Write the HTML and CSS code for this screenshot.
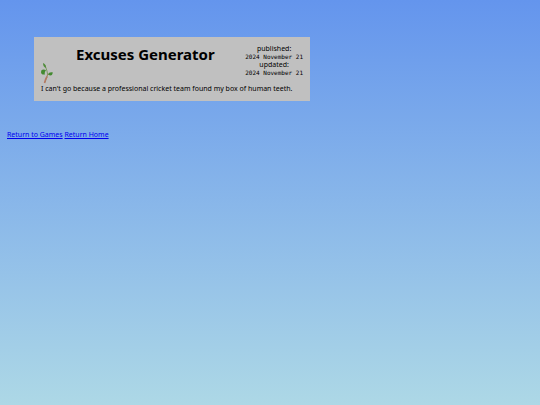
FILE: index.html
```html
<!DOCTYPE html>
<html lang="en">
<head>
<meta charset="utf-8">
<title>Excuses Generator</title>
<link rel="stylesheet" href="styles.css">
</head>
<body>
<main class="card">
  <header class="head">
    <svg class="sprig" viewBox="0 0 14 22" aria-hidden="true">
      <path d="M4 20.500Q5 17 6 15Q7 12 6 9Q5 6 4 3" fill="none" stroke="#7d9a62" stroke-width="1"/>
      <path d="M3.500 21Q4.500 17 6 14.500" fill="none" stroke="#b77762" stroke-width="1.500"/>
      <path d="M6 13.500Q7 13 8 11.500" fill="none" stroke="#b77762" stroke-width="1"/>
      <path d="M2 1Q5 2 5 6Q2 5 2 1Z" fill="#4f8c3a"/>
      <path d="M5 8Q0 6.500 0 10Q0 13 4 12.500Q3 11 5 8Z" fill="#438a31"/>
      <path d="M7 12.500Q8 9.500 12 10.500Q11 15 7 12.500Z" fill="#438a31"/>
    </svg>
    <h1 class="title">Excuses Generator</h1>
    <div class="dates">
      published:<time class="date" datetime="2024-11-21">2024 November 21</time>
      updated:<time class="date" datetime="2024-11-21">2024 November 21</time>
    </div>
  </header>
  <p class="excuse">I can't go because a professional cricket team found my box of human teeth.</p>
</main>
<nav class="links"><a href="#games">Return to Games</a> <a href="#home">Return Home</a></nav>
</body>
</html>
```
FILE: styles.css
```css
html {
  min-height: 100%;
  background: linear-gradient(#6495ed, #add8e6);
}
body {
  margin: 37px 7px;
  font: 7px/10px "Noto Sans", sans-serif;
  color: #000;
}
.card {
  width: fit-content;
  min-width: 276px;
  margin: 0 27px 29px;
  padding: 7px;
  box-sizing: border-box;
  background: #c0c0c0;
}
.head {
  display: flex;
  gap: 21px;
}
.sprig {
  width: 14px;
  height: 22px;
  align-self: flex-end;
}
.title {
  margin: 0;
  font-size: 15px;
  line-height: 20px;
}
.dates {
  margin: 0 0 8px auto;
  text-align: center;
}
.date {
  display: block;
  font: 6px/6px "DejaVu Sans Mono", monospace;
}
.excuse {
  margin: 0;
}
.links a {
  color: #0000ee;
}
```
